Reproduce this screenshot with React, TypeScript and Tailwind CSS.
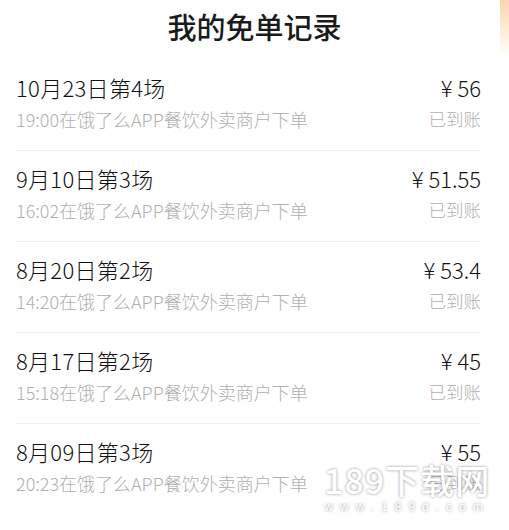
import React from "react";

type FreeOrder = {
  date: string;
  time: string;
  amount: string;
};

const orders: FreeOrder[] = [
  { date: "10月23日第4场", time: "19:00", amount: "56" },
  { date: "9月10日第3场", time: "16:02", amount: "51.55" },
  { date: "8月20日第2场", time: "14:20", amount: "53.4" },
  { date: "8月17日第2场", time: "15:18", amount: "45" },
  { date: "8月09日第3场", time: "20:23", amount: "55" },
];

const font = { fontFamily: '"Noto Sans CJK SC", "Noto Sans", sans-serif' };

function OrderRow({ order }: { order: FreeOrder }) {
  return (
    <div className="flex h-[91px] items-start justify-between border-t border-[#f1f1f1] pt-[11px]">
      <div className="flex flex-col">
        <span className="text-[22px] font-light leading-[32px] tracking-[0.3px] text-[#111]">{order.date}</span>
        <span className="text-[18px] font-light leading-[32px] text-[#b0b0b0]">
          {order.time}在饿了么APP餐饮外卖商户下单
        </span>
      </div>
      <div className="flex flex-col items-end">
        <span className="text-[22px] font-light leading-[32px] text-[#111]">¥ {order.amount}</span>
        <span className="text-[17.5px] font-light leading-[32px] text-[#b0b0b0]">已到账</span>
      </div>
    </div>
  );
}

export default function App() {
  return (
    <div className="relative h-[530px] w-[509px] overflow-hidden bg-white" style={font}>
      {/* orange edge of the page behind */}
      <div className="absolute right-0 top-0 h-[56px] w-[9px] bg-gradient-to-b from-[#f9d6ad] to-white" />

      <div className="flex h-[59px] items-center justify-center pb-[6px]">
        <h1 className="text-[29px] font-medium text-[#1a1a1a]">我的免单记录</h1>
      </div>

      <div className="pl-4 pr-7">
        <div className="[&>*:first-child]:border-transparent">
          {orders.map((o) => (
            <OrderRow key={o.date} order={o} />
          ))}
        </div>
      </div>

      {/* watermark */}
      <div className="absolute left-[324px] top-[461px] flex flex-col items-center text-white [text-shadow:0_0_3px_rgba(0,0,0,0.45)]">
        <span className="text-[34px] font-medium leading-[38px] tracking-[1px]">189下载网</span>
        <span className="text-[12px] leading-[16px] tracking-[7px]" style={{ fontFamily: '"Liberation Sans", sans-serif' }}>
          www.189d.com
        </span>
      </div>
    </div>
  );
}
